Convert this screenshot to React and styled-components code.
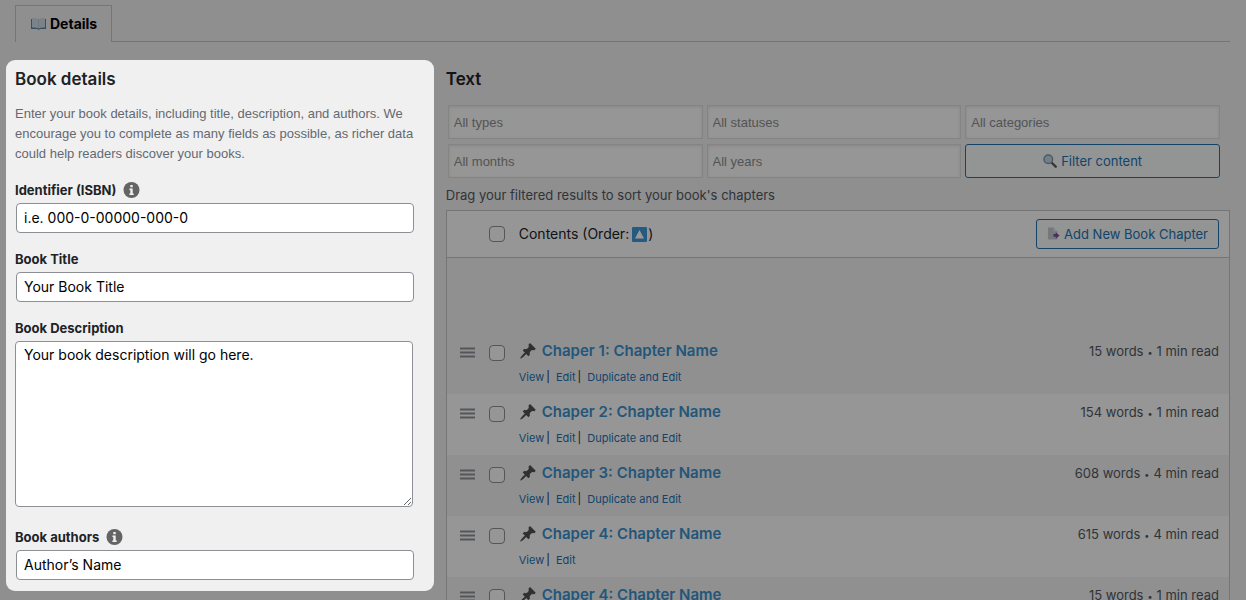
import React, { useState } from "react"
import styled, { createGlobalStyle } from "styled-components"

const GlobalStyle = createGlobalStyle`
  * {
    box-sizing: border-box;
  }
  body {
    --link: #2271b1;
    --line: #c3c4c7;
    --page: #eeeeee;
    margin: 0;
    height: 100vh;
    overflow: hidden;
    background: var(--page);
    color: #1d2327;
    font-family: Inter, "Liberation Sans", sans-serif;
    font-size: 13px;
    line-height: 20px;
  }
  input, textarea, select, button {
    margin: 0;
    font-family: inherit;
  }
`

const Page = styled.div`
  padding: 5px 16px 0 6px;
`

const Tabs = styled.nav`
  display: flex;
  margin: 0 0 18px 9px;
  border-bottom: 1px solid var(--line);
`

const Tab = styled.button`
  display: flex;
  align-items: center;
  gap: 4px;
  height: 37px;
  margin-bottom: -1px;
  padding: 0 14px 1px 15px;
  border: 1px solid var(--line);
  border-bottom: 0;
  background: var(--page);
  color: #000;
  font-size: 14px;
  font-weight: 700;
`

const Columns = styled.main`
  display: grid;
  grid-template-columns: minmax(0, 6fr) minmax(0, 11fr);
  align-items: start;
  gap: 12px;
`

// everything outside the focused panel is dimmed by its shadow
const FocusPanel = styled.section`
  position: relative;
  z-index: 1;
  padding: 8px 0 11px 9px;
  border-radius: 9px;
  background: #f0f0f1;
  box-shadow: 0 0 0 100vmax rgba(0, 0, 0, 0.4);
`

const Heading = styled.h2`
  margin: 0;
  font-size: 17px;
  font-weight: 600;
  line-height: 22px;
`

const Intro = styled.p`
  margin: 14px 0 16px;
  color: #646970;
  font-family: "Liberation Sans", Arial, sans-serif;
`

const Form = styled.form`
  display: flex;
  flex-direction: column;
  gap: 16px;
  padding-right: 20px;
`

const FieldBox = styled.div`
  display: flex;
  flex-direction: column;
  gap: 3px;
  label {
    display: flex;
    align-items: center;
    gap: 7px;
    font-weight: 700;
  }
`

const Input = styled.input`
  height: 30px;
  margin-left: 1px;
  padding: 0 7px 1px;
  border: 1px solid #8c8f94;
  border-radius: 4px;
  background: #fff;
  color: #000;
  font-size: 14px;
`

const TextArea = styled.textarea`
  height: 166px;
  margin: 0 1px 4px 0;
  padding: 3px 8px;
  border: 1px solid #8c8f94;
  border-radius: 4px;
  background: #fff;
  color: #000;
  font-size: 14px;
  line-height: 20px;
`

const Content = styled.section`
  padding-top: 8px;
`

const Filters = styled.div`
  display: grid;
  grid-template-columns: repeat(3, minmax(0, 1fr));
  gap: 5px 4px;
  margin: 15px 10px 7px 2px;
`

const Select = styled.select`
  height: 34px;
  padding: 0 5px;
  appearance: none;
  border: 1px solid #dcdcde;
  border-radius: 0;
  background: #fafafa;
  box-shadow: inset 0 1px 3px rgba(0, 0, 0, 0.1);
  color: #8c8c8c;
  font-family: "Liberation Sans", Arial, sans-serif;
  font-size: 13px;
`

const Button = styled.button`
  display: inline-flex;
  align-items: center;
  justify-content: center;
  gap: 4px;
  height: ${(props) => (props.$tall ? 34 : 30)}px;
  padding: 0 10px;
  border: 1px solid var(--link);
  border-radius: 3px;
  background: #f6f7f7;
  color: var(--link);
  font-size: 13px;
  white-space: nowrap;
`

const Hint = styled.p`
  margin: 0 0 5px;
  color: #50575e;
`

const Table = styled.table`
  width: 100%;
  border: 1px solid var(--line);
  border-collapse: separate;
  border-spacing: 0;
  background: #fafafa;
  table-layout: fixed;
  th,
  td {
    padding: 0;
    text-align: left;
    vertical-align: top;
    font-weight: 400;
  }
  thead th {
    height: 47px;
    border-bottom: 1px solid var(--line);
    font-size: 14px;
    vertical-align: middle;
  }
  th:last-child,
  td:last-child {
    padding-right: 10px;
    color: #50575e;
    text-align: right;
  }
`

const DragCol = styled.col`
  width: 42px;
`

const CheckCol = styled.col`
  width: 30px;
`

const MetaCol = styled.col`
  width: 220px;
`

const Spacer = styled.tr`
  height: 75px;
  background: #f1f1f1;
`

const Row = styled.tr`
  height: 61px;
  background: ${(props) => (props.$odd ? "#f1f1f1" : "#fafafa")};
  td {
    padding-top: 8px;
    line-height: 20px;
  }
`

const Handle = styled.button`
  display: block;
  margin: 6px 0 0 13px;
  padding: 0;
  border: 0;
  background: none;
`

const Check = styled.input`
  display: block;
  width: 16px;
  height: 16px;
  appearance: none;
  border: 1px solid #8c8f94;
  border-radius: 4px;
  background: #fafafa;
  td & {
    margin-top: 4px;
  }
`

const ChapterLink = styled.a`
  display: flex;
  align-items: center;
  gap: 5px;
  color: #3a8fcb;
  font-size: 15px;
  font-weight: 600;
  text-decoration: none;
`

const Actions = styled.div`
  display: flex;
  margin-top: 8px;
  font-size: 11px;
  line-height: 16px;
  a {
    color: var(--link);
    text-decoration: none;
  }
  span {
    margin: 0 6px 0 2px;
  }
`

const Dot = styled.span`
  margin: 0 4px;
  font-size: 9px;
`

const Order = styled.span`
  display: flex;
  align-items: center;
  svg {
    margin: 0 1px 0 3px;
  }
`

const BookIcon = () => (
  <svg width="15" height="12" viewBox="0 0 15 12">
    <path d="M0 1h15v10H9l-1.500 1L6 11H0z" fill="#5b86a6" />
    <path d="M1 0c3 0 5 0 6.500 1.200C9 0 11 0 14 0v9.500c-3 0-5 0-6.500 1C6 9.500 4 9.500 1 9.500z" fill="#cfdbe3" />
    <path d="M7.500 1.500v9" stroke="#b9c6cf" />
  </svg>
)

const InfoIcon = () => (
  <svg width="17" height="17" viewBox="0 0 17 17">
    <circle cx="8.500" cy="8" r="8" fill="#646464" />
    <path d="M7.300 3h2.400v2.200H7.300zM6.400 6.400h3.300v5h1v1.500H6.400v-1.500h.9V7.900h-.9z" fill="#f0f0f1" />
  </svg>
)

const SearchIcon = () => (
  <svg width="14" height="14" viewBox="0 0 14 14">
    <path d="M8.500 8.500l4.200 4.200" stroke="#5c5c60" strokeWidth="2.400" strokeLinecap="round" />
    <circle cx="5.300" cy="5.300" r="4.300" fill="#b6d9ef" stroke="#8c949c" strokeWidth="1.500" />
  </svg>
)

const AddPageIcon = () => (
  <svg width="13" height="14" viewBox="0 0 14 14">
    <path d="M1 0h6l4 4v9H1z" fill="#c3c9ce" />
    <path d="M7 0v4h4z" fill="#e3e7ea" />
    <path d="M7 7h2.500V5l4 3.500-4 3.500v-2H7z" fill="#7a4fa0" />
  </svg>
)

const UpIcon = () => (
  <svg width="15" height="15" viewBox="0 0 15 15">
    <rect width="15" height="15" rx="1" fill="#3f97d8" />
    <path d="M7.500 3l4.500 8.500H3z" fill="#fff" />
  </svg>
)

const HandleIcon = () => (
  <svg width="15" height="11" viewBox="0 0 15 11" display="block">
    <path d="M0 1.500h15M0 5.500h15M0 9.500h15" stroke="#8c8f94" strokeWidth="1.800" />
  </svg>
)

const PinIcon = () => (
  <svg width="18" height="18" viewBox="0 0 20 20">
    <path
      d="M10.440 3.020l1.820-1.820 6.360 6.350-1.830 1.820c-1.050-.680-2.480-.570-3.410.360l-.750.750c-.920.930-1.040 2.350-.350 3.410l-1.830 1.820-2.410-2.410-2.800 2.790c-.420.420-3.380 2.710-3.800 2.290s1.860-3.390 2.280-3.810l2.790-2.790L4.100 9.360l1.830-1.820c1.050.690 2.480.570 3.400-.360l.750-.750c.930-.920 1.050-2.350.360-3.410z"
      fill="#50504f"
    />
  </svg>
)

const Field = ({ id, label, info, children }) => (
  <FieldBox>
    <label htmlFor={id}>
      {label}
      {info && <InfoIcon />}
    </label>
    {children}
  </FieldBox>
)

const filters = ["All types", "All statuses", "All categories", "All months", "All years"]

const chapters = [
  { title: "Chaper 1: Chapter Name", words: 15, minutes: 1, copy: true },
  { title: "Chaper 2: Chapter Name", words: 154, minutes: 1, copy: true },
  { title: "Chaper 3: Chapter Name", words: 608, minutes: 4, copy: true },
  { title: "Chaper 4: Chapter Name", words: 615, minutes: 4 },
  { title: "Chaper 4: Chapter Name", words: 15, minutes: 1 },
]

const BookForm = () => {
  const [book, setBook] = useState({
    isbn: "i.e. 000-0-00000-000-0",
    title: "Your Book Title",
    description: "Your book description will go here.",
    authors: "Author’s Name",
  })
  const bind = (name) => ({
    id: name,
    value: book[name],
    onChange: (e) => setBook({ ...book, [name]: e.target.value }),
  })

  return (
    <Form>
      <Field id="isbn" label="Identifier (ISBN)" info>
        <Input {...bind("isbn")} />
      </Field>
      <Field id="title" label="Book Title">
        <Input {...bind("title")} />
      </Field>
      <Field id="description" label="Book Description">
        <TextArea {...bind("description")} />
      </Field>
      <Field id="authors" label="Book authors" info>
        <Input {...bind("authors")} />
      </Field>
    </Form>
  )
}

const Chapter = ({ chapter, odd }) => (
  <Row $odd={odd}>
    <td>
      <Handle type="button" aria-label="Move">
        <HandleIcon />
      </Handle>
    </td>
    <td>
      <Check type="checkbox" aria-label={chapter.title} />
    </td>
    <td>
      <ChapterLink href="#edit">
        <PinIcon />
        {chapter.title}
      </ChapterLink>
      <Actions>
        <a href="#view">View</a>
        <span>|</span>
        <a href="#edit">Edit</a>
        {chapter.copy && (
          <>
            <span>|</span>
            <a href="#duplicate">Duplicate and Edit</a>
          </>
        )}
      </Actions>
    </td>
    <td>
      {chapter.words} words<Dot>•</Dot>
      {chapter.minutes} min read
    </td>
  </Row>
)

const App = () => (
  <Page>
    <GlobalStyle />
    <Tabs>
      <Tab type="button">
        <BookIcon />
        Details
      </Tab>
    </Tabs>
    <Columns>
      <FocusPanel>
        <Heading>Book details</Heading>
        <Intro>
          Enter your book details, including title, description, and authors. We encourage you to
          complete as many fields as possible, as richer data could help readers discover your
          books.
        </Intro>
        <BookForm />
      </FocusPanel>
      <Content>
        <Heading>Text</Heading>
        <Filters>
          {filters.map((name) => (
            <Select key={name} aria-label={name}>
              <option>{name}</option>
            </Select>
          ))}
          <Button type="button" $tall>
            <SearchIcon />
            Filter content
          </Button>
        </Filters>
        <Hint>Drag your filtered results to sort your book's chapters</Hint>
        <Table>
          <colgroup>
            <DragCol />
            <CheckCol />
            <col />
            <MetaCol />
          </colgroup>
          <thead>
            <tr>
              <th />
              <th>
                <Check type="checkbox" aria-label="Select all" />
              </th>
              <th>
                <Order>
                  Contents (Order: <UpIcon />)
                </Order>
              </th>
              <th>
                <Button type="button">
                  <AddPageIcon />
                  Add New Book Chapter
                </Button>
              </th>
            </tr>
          </thead>
          <tbody>
            <Spacer>
              <td colSpan="4" />
            </Spacer>
            {chapters.map((chapter, i) => (
              <Chapter key={i} chapter={chapter} odd={i % 2 === 0} />
            ))}
          </tbody>
        </Table>
      </Content>
    </Columns>
  </Page>
)

export default App
